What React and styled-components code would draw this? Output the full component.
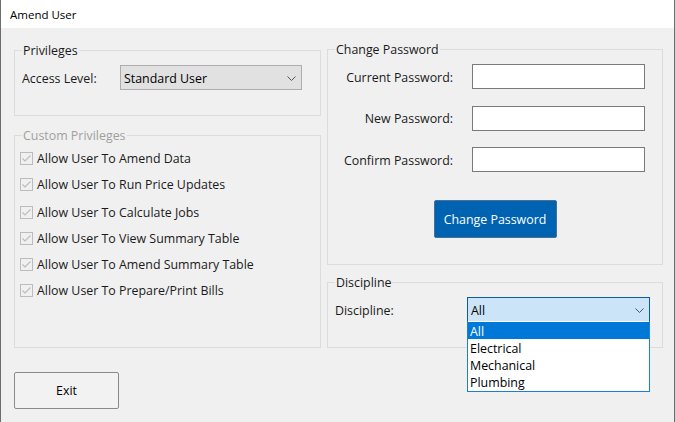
import React from 'react';
import styled, { createGlobalStyle } from 'styled-components';

const GlobalStyle = createGlobalStyle`
  html, body {
    margin: 0;
    padding: 0;
    background: #ffffff;
  }
  body {
    font-family: "Open Sans", "Noto Sans", sans-serif;
  }
`;

const Window = styled.div`
  width: 675px;
  height: 422px;
  box-sizing: border-box;
  border-left: 1px solid #6d6d6d;
  border-right: 1px solid #6d6d6d;
  background: #f0f0f0;
  display: flex;
  flex-direction: column;
  overflow: hidden;
  color: #1a1a1a;
  font-size: 12.4px;
`;

const TitleBar = styled.div`
  height: 28px;
  flex: none;
  background: #ffffff;
  display: flex;
  align-items: center;
  padding-left: 9px;
  font-size: 11.5px;
  color: #000000;
`;

const Body = styled.div`
  flex: 1;
  display: flex;
  gap: 6px;
  padding: 14px 11px 0 13px;
`;

const Column = styled.div`
  width: ${p => p.$width}px;
  display: flex;
  flex-direction: column;
  padding-top: ${p => p.$offset || 0}px;
`;

const Group = styled.fieldset`
  margin: 0 0 ${p => p.$after || 0}px;
  padding: 0 7px;
  border: 1px solid #dcdcdc;
  height: ${p => p.$height}px;
  box-sizing: border-box;
  min-width: 0;
  position: relative;
`;

const Legend = styled.legend`
  padding: 0 1px;
  font-size: 12.4px;
  line-height: 15px;
  color: ${p => (p.$disabled ? '#a0a0a0' : '#1a1a1a')};
`;

const FieldRow = styled.div`
  display: flex;
  align-items: center;
  margin-top: 7px;
`;

const Label = styled.span`
  width: ${p => p.$width}px;
  flex: none;
  white-space: nowrap;
  padding-top: 1px;
`;

const Combo = styled.div`
  position: relative;
  width: ${p => p.$width}px;
  height: 25px;
  box-sizing: border-box;
  display: flex;
  align-items: center;
  justify-content: space-between;
  padding: 1px 5px 0 3px;
  background: ${p => (p.$open ? '#cce4f7' : '#e1e1e1')};
  border: 1px solid ${p => (p.$open ? '#0b5ca8' : '#adadad')};
  color: #000000;
`;

const DropList = styled.ul`
  position: absolute;
  left: -1px;
  right: -1px;
  top: 100%;
  margin: 0;
  padding: 1px 0 1px;
  list-style: none;
  background: #ffffff;
  border: 1px solid #1c7fd6;
  border-top: none;
  z-index: 2;
`;

const DropItem = styled.li`
  height: 17px;
  line-height: 20px;
  padding-left: 2px;
  background: ${p => (p.$selected ? '#0078d7' : 'transparent')};
  color: ${p => (p.$selected ? '#ffffff' : '#000000')};
`;

const CheckList = styled.div`
  display: flex;
  flex-direction: column;
  margin: 7px 0 0 -2px;
`;

const CheckRow = styled.label`
  display: flex;
  align-items: center;
  gap: 4px;
  height: 17px;
  margin-top: ${p => p.$gap}px;
  color: #1a1a1a;
  white-space: nowrap;
`;

const CheckBox = styled.span`
  width: 13px;
  height: 13px;
  box-sizing: border-box;
  border: 1px solid #bcbcbc;
  display: flex;
  align-items: center;
  justify-content: center;
  flex: none;
`;

const PasswordGrid = styled.div`
  display: grid;
  grid-template-columns: 118px 173px;
  column-gap: 19px;
  row-gap: 16.5px;
  align-items: center;
  margin-top: 7px;
`;

const GridLabel = styled.span`
  text-align: right;
  white-space: nowrap;
  padding-top: 1px;
`;

const TextBox = styled.div`
  height: 25px;
  box-sizing: border-box;
  background: #ffffff;
  border: 1px solid #7a7a7a;
`;

const ButtonRow = styled.div`
  display: flex;
  justify-content: center;
  margin-top: 28px;
`;

const PrimaryButton = styled.button`
  width: 123px;
  height: 38px;
  background: #0063b1;
  color: #ffffff;
  border: 1px solid #4a6f95;
  border-radius: 2px;
  font: inherit;
  padding: 0;
`;

const PlainButton = styled.button`
  width: 105px;
  height: 37px;
  margin-top: 24px;
  background: #f2f2f2;
  color: #000000;
  border: 1px solid #8a8a8a;
  border-radius: 2px;
  font: inherit;
  padding: 0;
`;

const Chevron = () => (
  <svg width="9" height="5" viewBox="0 0 9 5">
    <path d="M0.5 0.5 L4.5 4.5 L8.5 0.5" fill="none" stroke="#555" strokeWidth="1" />
  </svg>
);

const Tick = () => (
  <svg width="11" height="11" viewBox="0 0 11 11">
    <path d="M1.5 5.5 L4 8 L9.5 2.5" fill="none" stroke="#bcbcbc" strokeWidth="1.1" />
  </svg>
);

const privileges = [
  { label: 'Allow User To Amend Data', gap: 0 },
  { label: 'Allow User To Run Price Updates', gap: 9 },
  { label: 'Allow User To Calculate Jobs', gap: 11 },
  { label: 'Allow User To View Summary Table', gap: 9 },
  { label: 'Allow User To Amend Summary Table', gap: 9 },
  { label: 'Allow User To Prepare/Print Bills', gap: 9 },
];

const disciplines = ['All', 'Electrical', 'Mechanical', 'Plumbing'];

const App = () => (
  <Window>
    <GlobalStyle />
    <TitleBar>Amend User</TitleBar>
    <Body>
      <Column $width={307} $offset={1}>
        <Group $height={73} $after={12}>
          <Legend>Privileges</Legend>
          <FieldRow>
            <Label $width={98}>Access Level:</Label>
            <Combo $width={182}>
              <span>Standard User</span>
              <Chevron />
            </Combo>
          </FieldRow>
        </Group>
        <Group $height={220}>
          <Legend $disabled>Custom Privileges</Legend>
          <CheckList>
            {privileges.map(p => (
              <CheckRow key={p.label} $gap={p.gap}>
                <CheckBox>
                  <Tick />
                </CheckBox>
                {p.label}
              </CheckRow>
            ))}
          </CheckList>
        </Group>
        <PlainButton type="button">Exit</PlainButton>
      </Column>
      <Column $width={336}>
        <Group $height={223} $after={10}>
          <Legend>Change Password</Legend>
          <PasswordGrid>
            <GridLabel>Current Password:</GridLabel>
            <TextBox />
            <GridLabel>New Password:</GridLabel>
            <TextBox />
            <GridLabel>Confirm Password:</GridLabel>
            <TextBox />
          </PasswordGrid>
          <ButtonRow>
            <PrimaryButton type="button">Change Password</PrimaryButton>
          </ButtonRow>
        </Group>
        <Group $height={73}>
          <Legend>Discipline</Legend>
          <FieldRow>
            <Label $width={132}>Discipline:</Label>
            <Combo $width={183} $open>
              <span>All</span>
              <Chevron />
              <DropList>
                {disciplines.map((d, i) => (
                  <DropItem key={d} $selected={i === 0}>
                    {d}
                  </DropItem>
                ))}
              </DropList>
            </Combo>
          </FieldRow>
        </Group>
      </Column>
    </Body>
  </Window>
);

export default App;
